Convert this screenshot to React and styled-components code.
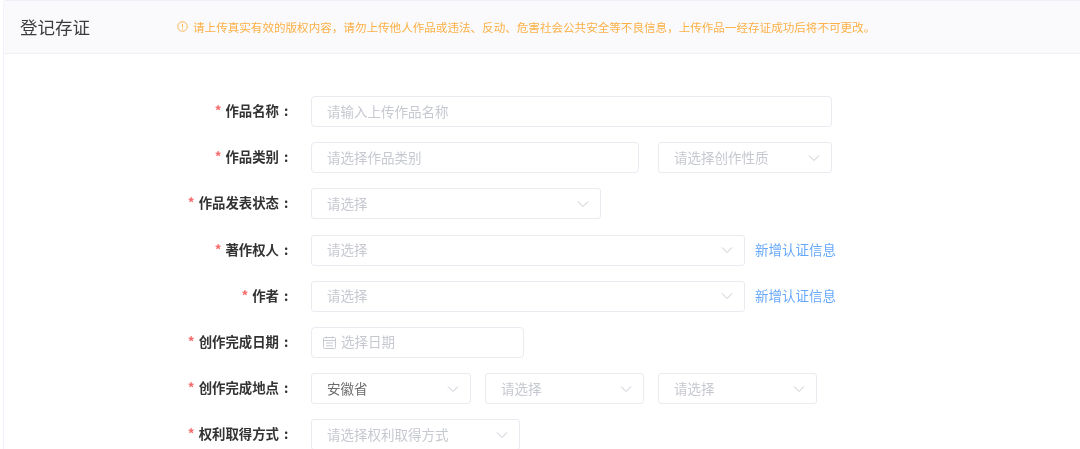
import React from 'react';
import styled, { createGlobalStyle } from 'styled-components';

const Global = createGlobalStyle`
  html, body { margin: 0; padding: 0; background: #fff; overflow: hidden; }
  body { font-family: "Noto Sans CJK SC", "Liberation Sans", sans-serif; }
`;
const Page = styled.div`
  width: 1080px; height: 449px; overflow: hidden; box-sizing: border-box;
  padding-left: 3px; background: #fff; filter: blur(0.3px);
`;
const Card = styled.div`
  height: 100%; border-left: 1px solid #f1f2fa; border-top: 1px solid #eef0f8; border-top-left-radius: 3px;
`;
const Header = styled.header`
  height: 52px; display: flex; align-items: center; background: #fafafd;
  border-bottom: 1px solid #eef0f6; padding-left: 16px;
`;
const Title = styled.h1`
  margin: 0; width: 157px; flex: none; font-size: 17.5px; font-weight: 400; color: #3c3c3c; line-height: 52px;
  padding-bottom: 2px; box-sizing: border-box; height: 52px;
`;
const Notice = styled.div`
  display: flex; align-items: center; gap: 5px; font-size: 11.57px; color: #fcb045; white-space: nowrap; padding-bottom: 1px;
`;
const NoticeIcon = styled.svg`
  width: 11px; height: 11px; flex: none;
`;
const Form = styled.div`
  padding-top: 42px; display: flex; flex-direction: column; gap: 15.2px;
`;
const Row = styled.div`
  display: flex; align-items: center; height: 31px;
`;
const Label = styled.label`
  width: 307px; flex: none; box-sizing: border-box; padding-right: 16px; padding-bottom: 3px; text-align: right; white-space: nowrap;
  font-size: 13.4px; font-weight: 700; color: #333;
  &::before { content: "*"; color: #f56c6c; margin-right: 4px; font-weight: 700; }
`;
const Colon = styled.span`
  display: inline-block; width: 11px; margin-left: 5px; text-align: left; font-weight: 700;
`;
const Fields = styled.div`
  display: flex; align-items: center;
`;
const Field = styled.div`
  box-sizing: border-box; height: 31px; width: ${p => p.$w}px; margin-right: ${p => p.$gap || 0}px;
  border: 1px solid #e9ebf1; border-radius: ${p => p.$r || 3}px; background: #fff;
  display: flex; align-items: center; padding: 0 11px 2px 15px; flex: none;
  font-size: 13.5px; color: ${p => p.$value ? '#6b6b6b' : '#c6c9d0'}; white-space: nowrap;
  justify-content: space-between;
`;
const DateValue = styled.span`
  display: flex; align-items: center; gap: 5px; margin-left: -4px;
`;
const Chevron = styled.svg`
  width: 12px; height: 12px; flex: none; fill: none; stroke: #c6c9d0; stroke-width: 1; margin-top: 2px;
`;
const CalIcon = styled.svg`
  width: 13px; height: 13px; flex: none; fill: none; stroke: #c6c9d0; stroke-width: 1; margin-top: 2px;
`;
const AddLink = styled.a`
  margin-left: 10px; padding-bottom: 2px; font-size: 13.5px; color: #66a8fb; white-space: nowrap;
`;

const Arrow = () => (
  <Chevron viewBox="0 0 12 12"><path d="M1 3.5 L6 8.5 L11 3.5" /></Chevron>
);

const Select = ({ w, gap, value, text }) => (
  <Field $w={w} $gap={gap} $value={value}><span>{text}</span><Arrow /></Field>
);

const FormRow = ({ label, children }) => (
  <Row>
    <Label>{label}<Colon>:</Colon></Label>
    <Fields>{children}</Fields>
  </Row>
);

export default function App() {
  return (
    <Page>
      <Global />
      <Card>
        <Header>
          <Title>登记存证</Title>
          <Notice>
            <NoticeIcon viewBox="0 0 12 12" fill="none" stroke="#fcb045">
              <circle cx="6" cy="6" r="5.2" />
              <path d="M6 3v4M6 8v1.2" />
            </NoticeIcon>
            请上传真实有效的版权内容，请勿上传他人作品或违法、反动、危害社会公共安全等不良信息，上传作品一经存证成功后将不可更改。
          </Notice>
        </Header>
        <Form>
          <FormRow label="作品名称"><Field $w={521} $r={4}>请输入上传作品名称</Field></FormRow>
          <FormRow label="作品类别">
            <Field $w={328} $gap={19} $r={4}>请选择作品类别</Field>
            <Select w={174} text="请选择创作性质" />
          </FormRow>
          <FormRow label="作品发表状态"><Select w={290} text="请选择" /></FormRow>
          <FormRow label="著作权人">
            <Select w={434} text="请选择" />
            <AddLink>新增认证信息</AddLink>
          </FormRow>
          <FormRow label="作者">
            <Select w={434} text="请选择" />
            <AddLink>新增认证信息</AddLink>
          </FormRow>
          <FormRow label="创作完成日期">
            <Field $w={213} $r={4}>
              <DateValue>
                <CalIcon viewBox="0 0 13 13">
                  <rect x="0.5" y="1.5" width="12" height="11" rx="1" />
                  <path d="M0.5 4.5h12M3.5 0.5v2M9.5 0.5v2M3 7h7M3 9.8h7" />
                </CalIcon>
                选择日期
              </DateValue>
            </Field>
          </FormRow>
          <FormRow label="创作完成地点">
            <Select w={160} gap={14} value text="安徽省" />
            <Select w={159} gap={14} text="请选择" />
            <Select w={159} text="请选择" />
          </FormRow>
          <FormRow label="权利取得方式"><Select w={209} text="请选择权利取得方式" /></FormRow>
        </Form>
      </Card>
    </Page>
  );
}
